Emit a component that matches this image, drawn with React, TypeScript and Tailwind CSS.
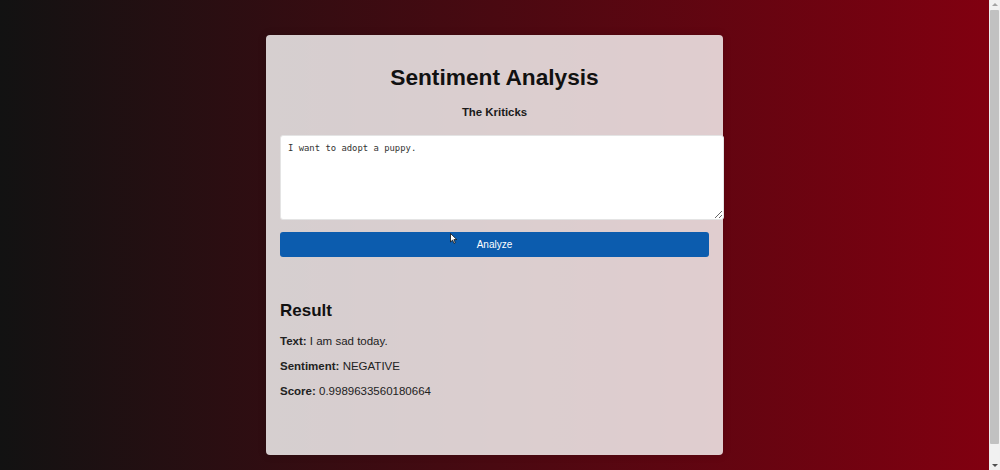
import { useState } from 'react';

const result = {
  text: 'I am sad today.',
  sentiment: 'NEGATIVE',
  score: '0.9989633560180664',
};

function Cursor() {
  return (
    <svg className="pointer-events-none absolute left-[170px] top-[2px] h-[11px] w-[8px]" viewBox="0 0 8 11" aria-hidden="true">
      <path d="M0.5 0.5 L0.5 9 L2.6 7.1 L4 10.3 L5.3 9.7 L3.9 6.6 L6.8 6.6 Z" fill="#fff" stroke="#111" strokeWidth="0.8" />
    </svg>
  );
}

function ScrollTrack() {
  return (
    <div className="flex h-full w-[11px] shrink-0 flex-col items-center bg-[#f1f1f1]">
      <span className="mt-[3px] h-0 w-0 border-x-[3px] border-b-[3px] border-x-transparent border-b-[#a3a3a3]" />
      <div className="mt-[4px] w-[9px] flex-1 rounded-[1px] bg-[#c1c1c1]" />
      <span className="mb-[3px] mt-[20px] h-0 w-0 border-x-[3px] border-t-[3px] border-x-transparent border-t-[#505050]" />
    </div>
  );
}

export default function App() {
  const [input, setInput] = useState('I want to adopt a puppy.');

  return (
    <div className="flex h-[470px] w-full overflow-hidden font-['Liberation_Sans',Arial,sans-serif]">
      <main className="flex min-w-0 flex-1 justify-center bg-linear-to-r/srgb from-[#121212] to-[#810010] pt-[35px]">
        <section className="flex h-[420px] w-[457px] flex-col rounded-[4px] bg-white/80 px-[14px] shadow-[0_0_8px_rgba(0,0,0,0.15)]">
          <h1 className="mt-[29px] text-center text-[22.7px] font-bold leading-[26px] text-[#111]">Sentiment Analysis</h1>
          <h4 className="mt-[15px] text-center text-[11.4px] font-bold leading-[14px] text-[#1a1a1a]">The Kriticks</h4>

          <textarea
            value={input}
            onChange={(e) => setInput(e.target.value)}
            className="mt-[16px] h-[85px] w-[444px] max-w-none shrink-0 rounded-[3px] border border-[#e4e4e4] bg-white px-[7px] py-[7px] font-['DejaVu_Sans_Mono','Liberation_Mono',monospace] text-[8.9px] leading-[11px] text-[#333] outline-none"
          />

          <div className="relative mt-[11px]">
            <button
              type="button"
              className="h-[25px] w-full rounded-[3px] bg-[#0c5cae] text-[10px] text-white"
            >
              Analyze
            </button>
            <Cursor />
          </div>

          <h2 className="mt-[44px] text-[17px] font-bold leading-[20px] text-[#111]">Result</h2>
          <div className="mt-[13px] flex flex-col gap-[11px] text-[11.5px] leading-[14px] text-[#222]">
            <p>
              <strong>Text:</strong> {result.text}
            </p>
            <p>
              <strong>Sentiment:</strong> {result.sentiment}
            </p>
            <p>
              <strong>Score:</strong> {result.score}
            </p>
          </div>
        </section>
      </main>
      <ScrollTrack />
    </div>
  );
}
